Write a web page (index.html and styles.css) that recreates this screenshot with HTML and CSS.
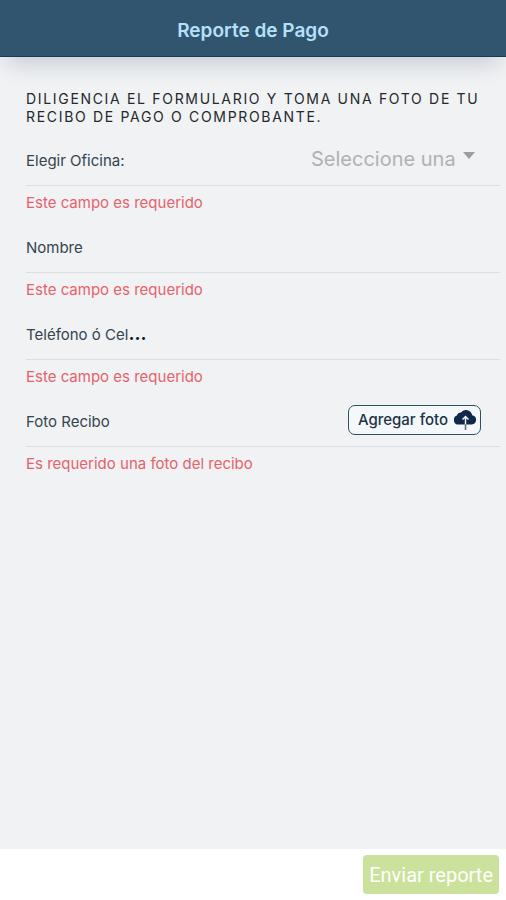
FILE: index.html
```html
<!DOCTYPE html>
<html lang="es">
<head>
<meta charset="utf-8">
<meta name="viewport" content="width=device-width, initial-scale=1">
<title>Reporte de Pago</title>
<link rel="stylesheet" href="styles.css">
</head>
<body>
<header class="topbar"><h1 class="title">Reporte de Pago</h1></header>
<form class="page">
  <main class="content">
    <p class="intro">Diligencia el formulario y toma una foto de tu recibo de pago o comprobante.</p>
    <div class="field">
      <label class="label" for="oficina">Elegir Oficina:</label>
      <select class="select" id="oficina"><option>Seleccione una</option></select>
      <svg class="caret" viewBox="0 0 12 7" aria-hidden="true"><path d="M0 0h12L6 7z"/></svg>
    </div>
    <p class="error">Este campo es requerido</p>
    <div class="field">
      <label class="label" for="nombre">Nombre</label>
      <input class="input" id="nombre" type="text">
    </div>
    <p class="error">Este campo es requerido</p>
    <div class="field">
      <label class="label" for="telefono">Teléfono ó Cel<span class="dots">...</span></label>
      <input class="input" id="telefono" type="tel">
    </div>
    <p class="error">Este campo es requerido</p>
    <div class="field">
      <label class="label" for="foto">Foto Recibo</label>
      <button class="photo" id="foto" type="button">Agregar foto
        <svg class="cloud" viewBox="0 0 22 20" aria-hidden="true">
          <path class="cloud-body" d="M4.500 14.500A4.600 4.600 0 0 1 2.800 5.600A4.600 4.600 0 0 1 7 2.500A6.300 6.300 0 0 1 18.200 5.200A4.700 4.700 0 0 1 17.800 14.500z"/>
          <path class="arrow" d="M11.500 14.500V7M8.500 9.500L11.500 6.500L14.500 9.500"/>
          <path class="stem" d="M11.500 14.500V20"/>
        </svg>
      </button>
    </div>
    <p class="error">Es requerido una foto del recibo</p>
  </main>
  <footer class="footer"><button class="send" type="submit">Enviar reporte</button></footer>
</form>
</body>
</html>
```
FILE: styles.css
```css
* { box-sizing: border-box; }
body {
  margin: 0;
  min-height: 100vh;
  display: flex;
  flex-direction: column;
  background: #f0f2f4;
  color: #35444f;
  font-family: Inter, "Liberation Sans", sans-serif;
}
h1, p { margin: 0; }
button, input, select { font-family: inherit; }
.topbar {
  padding: 19px 16px 13px;
  background: #31556e;
  border-bottom: 1px solid #123c58;
  box-shadow: 0 14px 22px -8px rgba(60, 75, 90, 0.24);
}
.title {
  color: #b5e0fb;
  font-size: 19px;
  font-weight: 600;
  line-height: 24px;
  text-align: center;
}
.page { flex: 1; display: flex; flex-direction: column; }
.content { flex: 1; padding: 33px 6px 0 26px; }
.intro {
  padding: 0 16px 10px 0;
  color: #24282c;
  font-size: 14px;
  line-height: 18px;
  letter-spacing: 0.12em;
  text-transform: uppercase;
}
.field {
  display: flex;
  align-items: center;
  height: 50px;
  padding-right: 19px;
  border-bottom: 1px solid #dcdfe2;
}
.label { flex: 0 0 auto; font-size: 15px; line-height: 20px; }
.dots { color: #101418; font-size: 19px; font-weight: 600; line-height: 1; }
.input {
  flex: 1;
  min-width: 0;
  height: 40px;
  margin-left: 16px;
  border: 0;
  outline: 0;
  background: transparent;
  font-size: 15px;
}
.select {
  margin: 0 7px 4px auto;
  padding: 0;
  border: 0;
  outline: 0;
  appearance: none;
  background: transparent;
  color: #adb2b6;
  font-size: 20px;
  line-height: 26px;
}
.caret { width: 12px; height: 7px; margin: 0 6px 10px 0; fill: #9a9fa3; }
.error {
  padding: 8px 0 11px;
  color: #e5626a;
  font-size: 15px;
  line-height: 18px;
}
.photo {
  display: flex;
  align-items: center;
  gap: 6px;
  height: 30px;
  margin: 0 0 4px auto;
  padding: 0 4px 0 9px;
  border: 1px solid #2d5266;
  border-radius: 7px;
  background: #f5f8fa;
  color: #1d3347;
  font-size: 15px;
  font-weight: 500;
}
.cloud { width: 22px; height: 20px; }
.cloud-body { fill: #10294a; }
.arrow, .stem { fill: none; stroke: #edf3f7; stroke-width: 1.5; }
.stem { stroke: #52667b; }
.footer {
  display: flex;
  justify-content: flex-end;
  padding: 6px 7px;
  background: #fff;
}
.send {
  height: 39px;
  padding: 0 6px;
  border: 0;
  border-radius: 4px;
  background: #cbe29c;
  color: #fff;
  font-family: Roboto, "Liberation Sans", sans-serif;
  font-size: 20px;
}
```
